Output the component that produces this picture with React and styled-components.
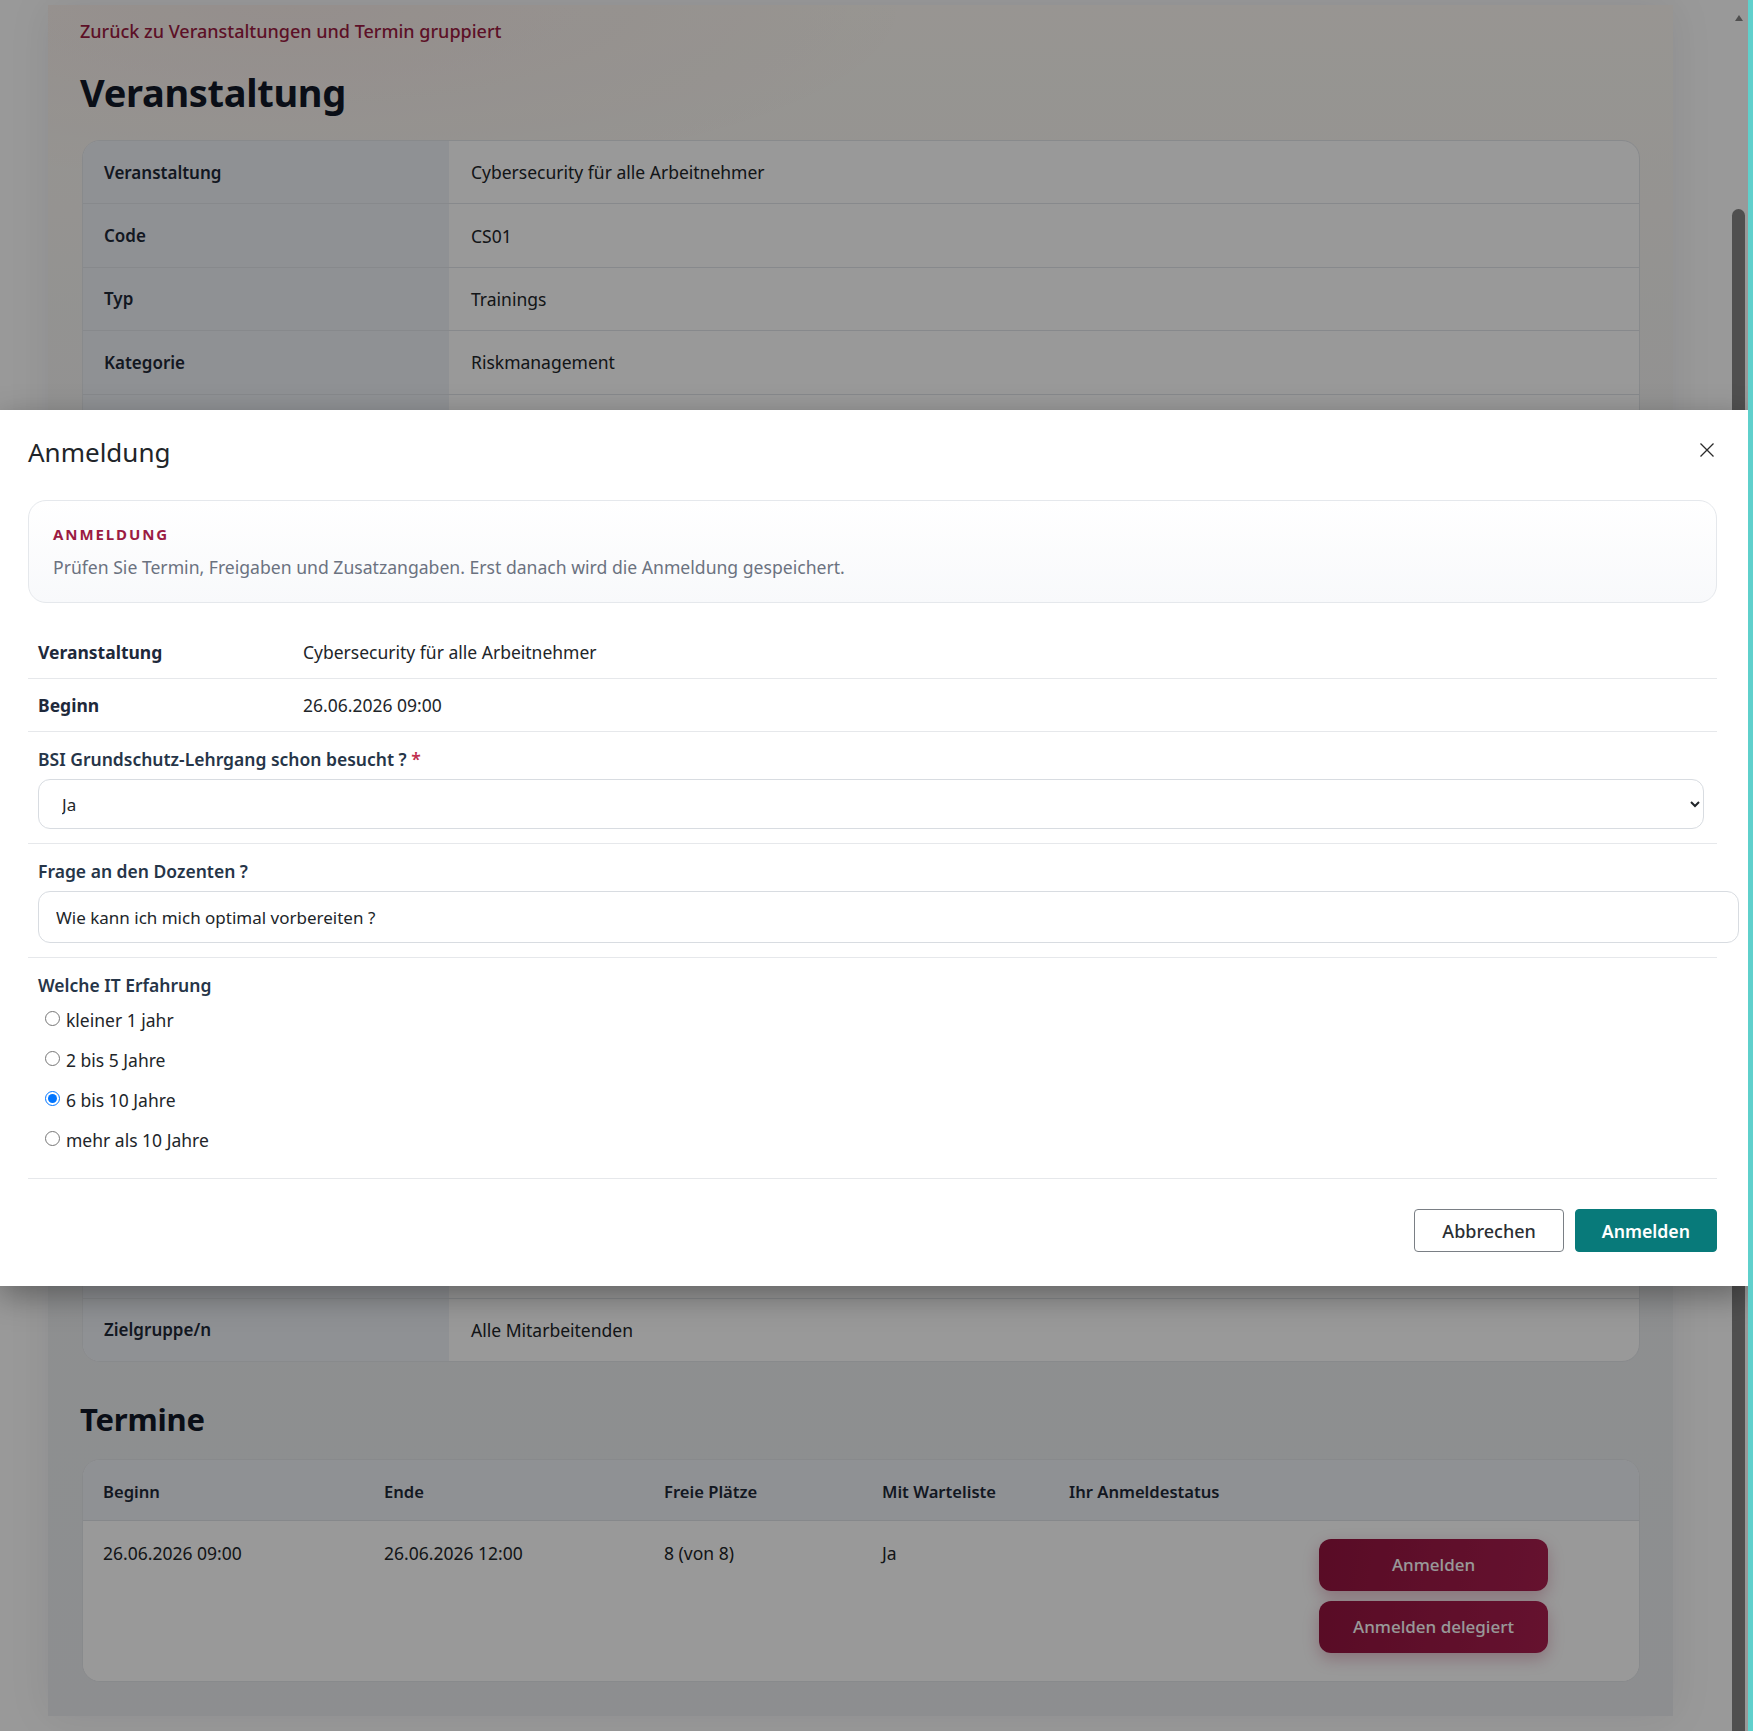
import React from 'react';
import styled, { createGlobalStyle } from 'styled-components';

const crimson = '#9b1b42';
const teal = '#087a7a';

const GlobalStyle = createGlobalStyle`
  html, body {
    margin: 0;
    padding: 0;
    height: 100%;
  }

  body {
    font-family: "Noto Sans", "Open Sans", sans-serif;
    color: #212529;
    background: #fff;
    overflow: hidden;
  }

  *, *::before, *::after {
    box-sizing: border-box;
  }
`;

const Frame = styled.div`
  display: flex;
  height: 100vh;
`;

const Viewport = styled.div`
  position: relative;
  flex: 1;
  display: flex;
  overflow: hidden;
`;

const WindowEdge = styled.div`
  width: 5px;
  background: #5fd0cc;
`;

/* page behind the dialog */

const Page = styled.main`
  flex: 1;
  padding: 5px 58px 0 48px;
  background: #fff;
`;

const Container = styled.section`
  padding: 14px 33px 34px 32px;
  background:
    radial-gradient(ellipse 900px 260px at 15% 0%, rgba(155, 27, 66, 0.05), transparent 70%),
    linear-gradient(180deg, #fdf9f3 0%, #f8f6f2 12%, #f0f1f3 35%, #ebedf0 100%);
  box-shadow: 0 0 40px rgba(15, 23, 42, 0.08);
`;

const BackLink = styled.a`
  display: block;
  font-size: 18px;
  line-height: 24px;
  font-weight: 500;
  color: ${crimson};
  text-decoration: none;
`;

const PageTitle = styled.h1`
  margin: 24px 0 23px;
  font-size: 38px;
  line-height: 50px;
  font-weight: 700;
  color: #111827;
  letter-spacing: -0.3px;
`;

const SectionTitle = styled.h2`
  margin: 38px 0 21px;
  font-size: 31px;
  line-height: 38px;
  font-weight: 700;
  color: #111827;
  letter-spacing: -0.2px;
`;

const Card = styled.div`
  margin-left: 2px;
  border: 1px solid #e3e6ea;
  border-radius: 18px;
  background: #fff;
  overflow: hidden;
`;

const DetailRow = styled.div`
  display: grid;
  grid-template-columns: 366px 1fr;
  min-height: ${p => (p.$tall ? 143.6 : 63.4)}px;
  border-bottom: 1px solid #e2e5e9;

  &:last-child {
    border-bottom: none;
    min-height: 62px;
  }
`;

const DetailKey = styled.div`
  display: flex;
  align-items: center;
  padding: 0 21px;
  background: #eef2f7;
  font-size: 17px;
  font-weight: 600;
  color: #1f2937;
`;

const DetailValue = styled.div`
  display: flex;
  align-items: center;
  padding: 0 22px;
  font-size: 17.5px;
  color: #212529;
`;

const DatesGrid = styled.div`
  display: grid;
  grid-template-columns: 281px 280px 218px 187px 250px 1fr;
  background: ${p => (p.$head ? '#eef2f7' : '#fff')};
  border-bottom: ${p => (p.$head ? '1px solid #dfe3e8' : 'none')};
  min-height: ${p => (p.$head ? 61 : 160)}px;
  padding-top: ${p => (p.$head ? 3 : 0)}px;
  align-items: ${p => (p.$head ? 'center' : 'start')};
`;

const HeadCell = styled.div`
  padding: 0 20px;
  font-size: 16.6px;
  font-weight: 600;
  color: #1f2937;
`;

const Cell = styled.div`
  padding: 20px 20px 0;
  font-size: 17.5px;
  line-height: 24px;
  color: #212529;
`;

const ActionCell = styled.div`
  display: flex;
  flex-direction: column;
  gap: 10px;
  padding: 18px 20px 28px 20px;
`;

const PillButton = styled.button`
  width: 229px;
  height: 52px;
  border: none;
  border-radius: 12px;
  background: linear-gradient(100deg, #94143f 0%, #a91e4f 100%);
  box-shadow: 0 6px 16px rgba(157, 25, 67, 0.28);
  color: #fff;
  font-family: inherit;
  font-size: 17px;
  font-weight: 500;
`;

/* scrollbar rail of the page */

const ScrollRail = styled.div`
  width: 17px;
  display: flex;
  flex-direction: column;
  align-items: center;
  padding: 15px 3px 0 1px;
  background: #fff;
`;

const RailArrow = styled.div`
  width: 0;
  height: 0;
  border-left: 4px solid transparent;
  border-right: 4px solid transparent;
  border-bottom: 6px solid #848484;
`;

const RailThumb = styled.div`
  width: 13px;
  flex: 1;
  margin-top: 188px;
  border-radius: 7px 7px 0 0;
  background: #848484;
`;

/* dialog */

const Backdrop = styled.div`
  position: absolute;
  inset: 0;
  background: rgba(0, 0, 0, 0.4);
`;

const Dialog = styled.div`
  position: absolute;
  top: 410px;
  left: 0;
  right: 0;
  padding: 27px 31px 34px 28px;
  background: #fff;
  box-shadow: 0 10px 30px rgba(0, 0, 0, 0.35);
`;

const DialogHeader = styled.div`
  display: flex;
  align-items: center;
  justify-content: space-between;
  margin-bottom: 32px;
`;

const DialogTitle = styled.h3`
  margin: 0;
  font-size: 26px;
  line-height: 31px;
  font-weight: 400;
  color: #212529;
`;

const CloseButton = styled.button`
  display: flex;
  align-items: center;
  justify-content: center;
  width: 24px;
  height: 24px;
  margin: -6px -2px 0 0;
  padding: 0;
  border: none;
  background: transparent;
  color: #2b2b2b;
`;

const InfoBox = styled.div`
  padding: 23px 23px 23px 24px;
  border: 1px solid #e5e8ec;
  border-radius: 18px;
  background: linear-gradient(180deg, #ffffff 0%, #f8f9fb 100%);
`;

const Eyebrow = styled.div`
  font-size: 15px;
  line-height: 20px;
  font-weight: 700;
  letter-spacing: 1.9px;
  color: ${crimson};
`;

const InfoText = styled.p`
  margin: 11px 0 0;
  font-size: 17.6px;
  line-height: 24px;
  color: #6b7280;
`;

const SummaryList = styled.div`
  margin-top: 23px;
`;

const SummaryRow = styled.div`
  display: grid;
  grid-template-columns: 265px 1fr;
  padding: 14px 10px 14px;
  border-bottom: 1px solid #e6e8eb;
  font-size: 17.5px;
  line-height: 24px;
`;

const SummaryKey = styled.div`
  font-weight: 700;
  color: #1e293b;
`;

const SummaryValue = styled.div`
  color: #212529;
`;

const Question = styled.div`
  display: flex;
  flex-direction: column;
  padding: 15px 13px 14px 10px;
  border-bottom: 1px solid #e6e8eb;
`;

const QuestionLabel = styled.label`
  margin-bottom: ${p => (p.$tight ? 3 : 8)}px;
  font-size: 17.5px;
  line-height: 24px;
  font-weight: 600;
  color: #263548;
`;

const Required = styled.span`
  color: #c0304f;
`;

const Select = styled.select`
  width: 100%;
  height: 50px;
  padding: 0 8px 0 19px;
  border: 1px solid #d8dce1;
  border-radius: 12px;
  background: #fff;
  font-family: inherit;
  font-size: 17px;
  color: #212529;
`;

const TextInput = styled.input`
  width: calc(100% + 35px);
  height: 52px;
  padding: 0 17px;
  border: 1px solid #d8dce1;
  border-radius: 12px;
  font-family: inherit;
  font-size: 17px;
  color: #212529;
`;

const Option = styled.label`
  display: flex;
  align-items: center;
  height: 40px;
  font-size: 17.5px;
  color: #212529;

  input {
    width: 15px;
    height: 15px;
    margin: -4px 6px 0 7px;
  }
`;

const OptionList = styled.div`
  padding-bottom: 4px;
`;

const DialogFooter = styled.div`
  display: flex;
  justify-content: flex-end;
  gap: 11px;
  margin-top: 30px;
`;

const FooterButton = styled.button`
  height: 43px;
  padding: 0 ${p => (p.$primary ? 26 : 27)}px;
  border: 1px solid ${p => (p.$primary ? teal : '#7a7f85')};
  border-radius: 4px;
  background: ${p => (p.$primary ? teal : '#fff')};
  color: ${p => (p.$primary ? '#fff' : '#2b2f33')};
  font-family: inherit;
  font-size: ${p => (p.$primary ? 17.7 : 18)}px;
  font-weight: ${p => (p.$primary ? 600 : 500)};
`;

const details = [
  ['Veranstaltung', 'Cybersecurity für alle Arbeitnehmer'],
  ['Code', 'CS01'],
  ['Typ', 'Trainings'],
  ['Kategorie', 'Riskmanagement'],
  ['Sprache', 'Deutsch'],
  ['Dauer', '3 Stunden'],
  ['Ort', 'Online'],
  ['Format', 'Virtuelles Klassenzimmer'],
  ['Beschreibung', 'Grundlagen der Informationssicherheit im Arbeitsalltag: Phishing erkennen, sichere Passwörter, Umgang mit mobilen Geräten und Meldewege bei Sicherheitsvorfällen.', true],
  ['Lernziele', 'Risiken erkennen und richtig reagieren'],
  ['Voraussetzungen', 'Keine'],
  ['Veranstalter', 'IT-Sicherheit'],
  ['Referent/in', 'Extern'],
  ['Kosten', 'Keine'],
  ['Anmeldeschluss', '19.06.2026'],
  ['Mindestteilnehmer', '4'],
  ['Max. Teilnehmer', '8'],
  ['Zielgruppe/n', 'Alle Mitarbeitenden'],
];

const experience = ['kleiner 1 jahr', '2 bis 5 Jahre', '6 bis 10 Jahre', 'mehr als 10 Jahre'];

const CloseIcon = () => (
  <svg width="16" height="16" viewBox="0 0 16 16" fill="none" stroke="currentColor" strokeWidth="1.3">
    <path d="M1.5 1.5l13 13M14.5 1.5l-13 13" />
  </svg>
);

export default function App() {
  return (
    <>
      <GlobalStyle />
      <Frame>
        <Viewport>
          <Page>
            <Container>
              <BackLink href="#">Zurück zu Veranstaltungen und Termin gruppiert</BackLink>
              <PageTitle>Veranstaltung</PageTitle>
              <Card>
                {details.map(([key, value, tall]) => (
                  <DetailRow key={key} $tall={tall}>
                    <DetailKey>{key}</DetailKey>
                    <DetailValue>{value}</DetailValue>
                  </DetailRow>
                ))}
              </Card>

              <SectionTitle>Termine</SectionTitle>
              <Card>
                <DatesGrid $head>
                  <HeadCell>Beginn</HeadCell>
                  <HeadCell>Ende</HeadCell>
                  <HeadCell>Freie Plätze</HeadCell>
                  <HeadCell>Mit Warteliste</HeadCell>
                  <HeadCell>Ihr Anmeldestatus</HeadCell>
                  <HeadCell />
                </DatesGrid>
                <DatesGrid>
                  <Cell>26.06.2026 09:00</Cell>
                  <Cell>26.06.2026 12:00</Cell>
                  <Cell>8 (von 8)</Cell>
                  <Cell>Ja</Cell>
                  <Cell />
                  <ActionCell>
                    <PillButton>Anmelden</PillButton>
                    <PillButton>Anmelden delegiert</PillButton>
                  </ActionCell>
                </DatesGrid>
              </Card>
            </Container>
          </Page>

          <ScrollRail>
            <RailArrow />
            <RailThumb />
          </ScrollRail>

          <Backdrop />

          <Dialog role="dialog" aria-modal="true">
            <DialogHeader>
              <DialogTitle>Anmeldung</DialogTitle>
              <CloseButton aria-label="Schließen">
                <CloseIcon />
              </CloseButton>
            </DialogHeader>

            <InfoBox>
              <Eyebrow>ANMELDUNG</Eyebrow>
              <InfoText>Prüfen Sie Termin, Freigaben und Zusatzangaben. Erst danach wird die Anmeldung gespeichert.</InfoText>
            </InfoBox>

            <SummaryList>
              <SummaryRow>
                <SummaryKey>Veranstaltung</SummaryKey>
                <SummaryValue>Cybersecurity für alle Arbeitnehmer</SummaryValue>
              </SummaryRow>
              <SummaryRow>
                <SummaryKey>Beginn</SummaryKey>
                <SummaryValue>26.06.2026 09:00</SummaryValue>
              </SummaryRow>
            </SummaryList>

            <Question>
              <QuestionLabel>BSI Grundschutz-Lehrgang schon besucht ? <Required>*</Required></QuestionLabel>
              <Select defaultValue="ja">
                <option value="ja">Ja</option>
                <option value="nein">Nein</option>
              </Select>
            </Question>

            <Question>
              <QuestionLabel>Frage an den Dozenten ?</QuestionLabel>
              <TextInput type="text" defaultValue="Wie kann ich mich optimal vorbereiten ?" />
            </Question>

            <Question>
              <QuestionLabel $tight>Welche IT Erfahrung</QuestionLabel>
              <OptionList>
                {experience.map(label => (
                  <Option key={label}>
                    <input type="radio" name="it-erfahrung" defaultChecked={label === '6 bis 10 Jahre'} />
                    {label}
                  </Option>
                ))}
              </OptionList>
            </Question>

            <DialogFooter>
              <FooterButton>Abbrechen</FooterButton>
              <FooterButton $primary>Anmelden</FooterButton>
            </DialogFooter>
          </Dialog>
        </Viewport>
        <WindowEdge />
      </Frame>
    </>
  );
}
